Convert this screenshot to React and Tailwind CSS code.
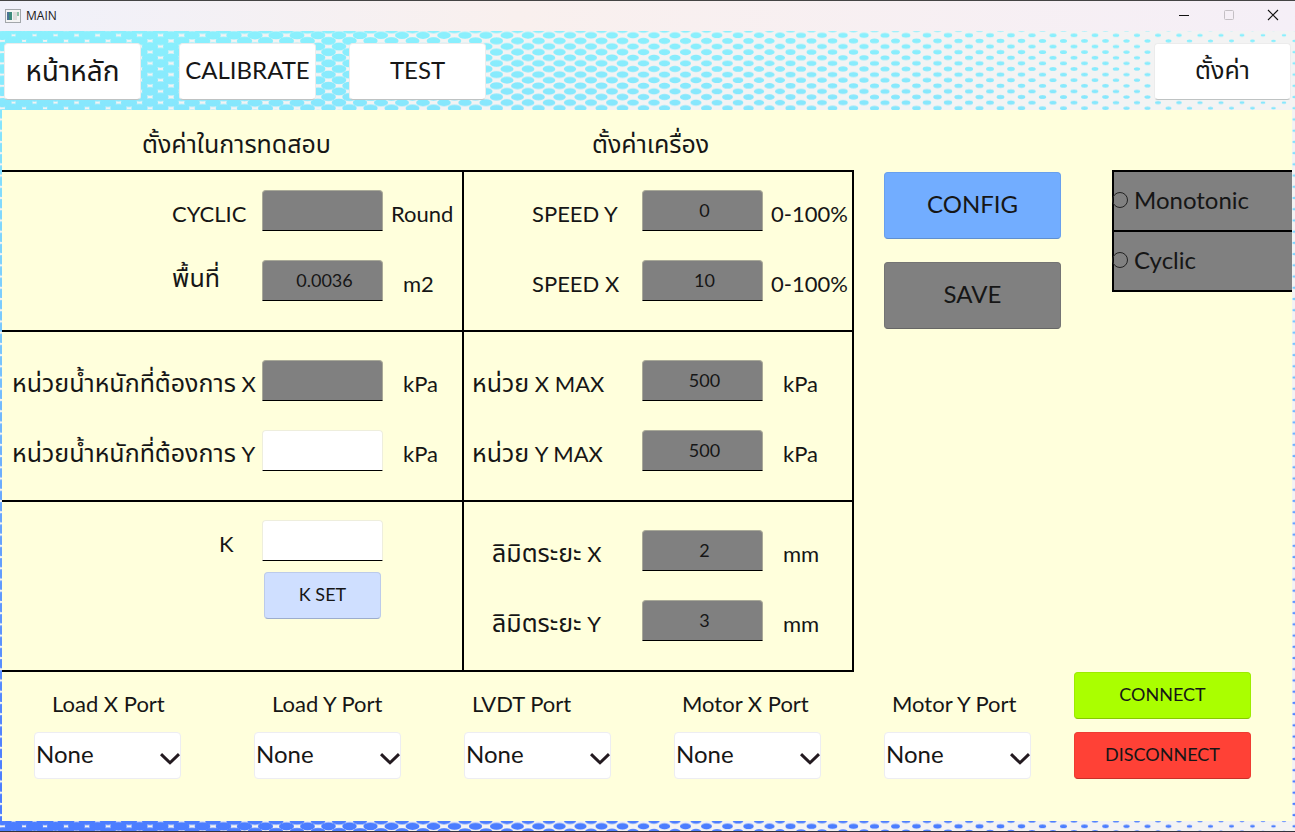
import React from "react";

const COLUMN_STEP = 21;
const ROW_STEP = 11.22;

const dots = Array.from({ length: 128 }, (_, i) => {
  const x = 3 + i * (COLUMN_STEP / 2);
  const rx = Math.max(1.5, 8.8 - 0.0042 * x - 0.0000007 * x * x);
  return { x, rx, ry: rx * 0.534, even: i % 2 === 0 };
});

function Halftone() {
  return (
    <svg className="absolute inset-0 h-full w-full" aria-hidden="true">
      <defs>
        <linearGradient id="sky" x1="0" y1="0" x2="0" y2="1">
          <stop offset="0" stopColor="#8af0fd" />
          <stop offset="0.1" stopColor="#86e6fd" />
          <stop offset="0.39" stopColor="#78c6fe" />
          <stop offset="0.6" stopColor="#68a6fe" />
          <stop offset="0.9" stopColor="#4f80ff" />
          <stop offset="1" stopColor="#4b7dff" />
        </linearGradient>
        <pattern id="dots" x="0" y="-1.3" width="1344" height={ROW_STEP} patternUnits="userSpaceOnUse">
          {dots.map((d) =>
            (d.even ? [-ROW_STEP / 2, ROW_STEP / 2, ROW_STEP * 1.5] : [0, ROW_STEP]).map((y) => (
              <ellipse key={`${d.x}-${y}`} cx={d.x} cy={y} rx={d.rx} ry={d.ry} fill="#fff" />
            ))
          )}
        </pattern>
        <mask id="dotMask">
          <rect width="100%" height="100%" fill="url(#dots)" />
        </mask>
      </defs>
      <rect width="100%" height="100%" fill="#f3f3f3" />
      <rect width="100%" height="100%" fill="url(#sky)" mask="url(#dotMask)" />
    </svg>
  );
}

function TitleBar() {
  return (
    <header className="flex h-[31px] items-center border-t border-[#444] bg-linear-to-r from-[#f0f1fa] via-[#f9f0ee] via-40% to-[#f5eff7] pl-[5px]">
      <svg width="16" height="14" viewBox="0 0 16 14" aria-hidden="true">
        <rect x="0.5" y="0.5" width="15" height="13" fill="#f4f4f4" stroke="#a3a7ab" />
        <rect x="2" y="3" width="5" height="8" fill="#3d8a7c" />
        <rect x="2" y="3" width="2" height="8" fill="#4c7396" />
        <rect x="8" y="3" width="4" height="8" fill="#dcdcdc" />
        <rect x="12" y="3" width="2" height="4" fill="#8fc0a8" />
      </svg>
      <h1 className="ml-[5px] font-['Open_Sans',sans-serif] text-xs text-[#1a1a1a]">MAIN</h1>
      <div className="ml-auto flex h-full pb-[2px]">
        <button aria-label="Minimize" className="flex w-[45px] items-center justify-center">
          <svg width="12" height="12" viewBox="0 0 12 12"><path d="M1 6.5H11" stroke="#111" /></svg>
        </button>
        <button aria-label="Maximize" disabled className="flex w-[45px] items-center justify-center">
          <svg width="12" height="12" viewBox="0 0 12 12"><rect x="1.5" y="1.5" width="9" height="9" rx="1" fill="none" stroke="#c4bfc4" /></svg>
        </button>
        <button aria-label="Close" className="flex w-[44px] items-center justify-center">
          <svg width="12" height="12" viewBox="0 0 12 12"><path d="M1 1L11 11M11 1L1 11" stroke="#111" strokeWidth="1.1" /></svg>
        </button>
      </div>
    </header>
  );
}

function NavButton({ children, className = "text-2xl" }) {
  return (
    <button className={`h-[57px] w-[137px] rounded-[4px] border border-[#ececec] border-b-[#bfc3c3] bg-white pb-1 whitespace-nowrap ${className}`}>
      {children}
    </button>
  );
}

function Field({ id, thai, label, unit, value = "", off = true, cols, labelClass = "", unitClass = "pl-5" }) {
  return (
    <div className={`grid h-[41px] items-end whitespace-nowrap ${cols}`}>
      <label htmlFor={id} className={`text-[22px] leading-[34px] ${labelClass}`}>
        {thai && <span className="text-[25px]">{thai}</span>}
        {thai && label ? " " : ""}
        {label}
      </label>
      <input
        id={id}
        defaultValue={value}
        disabled={off}
        className={`h-[41px] w-full rounded-t-[4px] border border-b-black pb-[2px] pl-1 text-center text-lg ${off ? "border-[#a9a998] bg-[#808080]" : "border-[#eeeedd] bg-white"}`}
      />
      <span className={`text-[22px] leading-[34px] ${unitClass}`}>{unit}</span>
    </div>
  );
}

const LEFT = "grid-cols-[260px_121px_1fr]";
const RIGHT = "grid-cols-[178px_121px_1fr]";

function PortSelect({ id, label, indent, className = "" }) {
  return (
    <div className={`w-[147px] ${className}`}>
      <label htmlFor={id} className={`block text-[22px] leading-8 whitespace-nowrap ${indent}`}>{label}</label>
      <div className="relative mt-[12px]">
        <select id={id} className="h-[47px] w-full appearance-none rounded-[4px] border border-[#ededf2] bg-white pb-1 pl-px text-2xl">
          <option>None</option>
        </select>
        <svg className="pointer-events-none absolute top-5 right-px" width="20" height="14" viewBox="0 0 20 14" aria-hidden="true">
          <path d="M1 2.2L10 10.8L19 2.2" fill="none" stroke="#231a20" strokeWidth="3" />
        </svg>
      </div>
    </div>
  );
}

function ModeOption({ label }) {
  return (
    <label className="flex h-[60px] items-center gap-[6px] border-t-2 border-black pb-[3px] text-2xl">
      <input type="radio" name="mode" disabled className="-ml-[2px] size-4 appearance-none rounded-full border border-[#222]" />
      {label}
    </label>
  );
}

export default function App() {
  return (
    <div className="flex min-h-screen flex-col font-[Lato,'Noto_Sans_Thai',sans-serif] text-[#161616]">
      <TitleBar />
      <div className="relative flex grow flex-col border-b border-[#33333c]">
        <Halftone />
        <nav className="relative flex h-[79px] items-center pt-3 pr-1 pb-[10px] pl-1">
          <NavButton className="text-[28px]">หน้าหลัก</NavButton>
          <NavButton className="ml-[38px] text-2xl">CALIBRATE</NavButton>
          <NavButton className="ml-[33px] text-2xl">TEST</NavButton>
          <NavButton className="ml-auto text-[25px]">ตั้งค่า</NavButton>
        </nav>

        <main className="relative mr-[3px] mb-[10px] ml-[2px] grow bg-[#ffffdc]">
          <div className="flex">
            <div className="grid shrink-0 grid-cols-[460px_392px]">
              <h2 className="flex h-[60px] items-center pt-2 pl-[140px] text-[25px]">ตั้งค่าในการทดสอบ</h2>
              <h2 className="flex h-[60px] items-center pt-2 pl-[130px] text-[25px]">ตั้งค่าเครื่อง</h2>

              <section className="flex h-40 flex-col gap-[29px] border-t-2 border-black pt-[18px]">
                <Field id="cyclic" label="CYCLIC" unit="Round" cols={LEFT} labelClass="pl-[170px]" unitClass="pl-2" />
                <Field id="area" thai="พื้นที่" value="0.0036" unit="m2" cols={LEFT} labelClass="self-start pl-[170px]" />
              </section>
              <section className="flex h-40 flex-col gap-[29px] border-x-2 border-t-2 border-black pt-[18px]">
                <Field id="speedY" label="SPEED Y" value="0" unit="0-100%" cols={RIGHT} labelClass="pl-[68px]" unitClass="pl-2" />
                <Field id="speedX" label="SPEED X" value="10" unit="0-100%" cols={RIGHT} labelClass="pl-[68px]" unitClass="pl-2" />
              </section>

              <section className="flex h-[170px] flex-col gap-[29px] border-t-2 border-black pt-7">
                <Field id="targetX" thai="หน่วยน้ำหนักที่ต้องการ" label="X" unit="kPa" cols={LEFT} labelClass="pl-[10px]" />
                <Field id="targetY" thai="หน่วยน้ำหนักที่ต้องการ" label="Y" unit="kPa" off={false} cols={LEFT} labelClass="pl-[10px]" />
              </section>
              <section className="flex h-[170px] flex-col gap-[29px] border-x-2 border-t-2 border-black pt-7">
                <Field id="maxX" thai="หน่วย" label="X MAX" value="500" unit="kPa" cols={RIGHT} labelClass="pl-2" />
                <Field id="maxY" thai="หน่วย" label="Y MAX" value="500" unit="kPa" cols={RIGHT} labelClass="pl-2" />
              </section>

              <section className="h-[172px] border-y-2 border-black pt-[18px]">
                <Field id="k" label="K" off={false} cols={LEFT} labelClass="pl-[217px]" />
                <button className="mt-[11px] ml-[262px] h-[47px] w-[117px] rounded-[4px] border border-[#bccbea] border-b-[#9dadcd] bg-[#cfdfff] pb-1 text-lg">K SET</button>
              </section>
              <section className="flex h-[172px] flex-col gap-[29px] border-2 border-black pt-7">
                <Field id="limitX" thai="ลิมิตระยะ" label="X" value="2" unit="mm" cols={RIGHT} labelClass="pl-7" />
                <Field id="limitY" thai="ลิมิตระยะ" label="Y" value="3" unit="mm" cols={RIGHT} labelClass="pl-7" />
              </section>
            </div>

            <div className="flex grow items-start pt-[60px] pl-[30px]">
              <div className="mt-[2px] flex w-[177px] flex-col gap-[23px]">
                <button className="h-[67px] rounded-[4px] border border-[#68a0ee] border-b-[#5f8fd0] bg-[#72adff] pb-1 text-2xl">CONFIG</button>
                <button disabled className="h-[67px] rounded-[4px] border border-[#747474] border-b-[#666] bg-[#808080] pb-1 text-2xl">SAVE</button>
              </div>
              <fieldset className="ml-auto w-[180px] border-b-2 border-l-2 border-black bg-[#808080]">
                <ModeOption label="Monotonic" />
                <ModeOption label="Cyclic" />
              </fieldset>
            </div>
          </div>

          <div className="flex items-start pr-[41px] pl-8">
            <div className="flex gap-[63px] pt-4">
              <PortSelect id="loadX" label="Load X Port" indent="pl-[18px]" className="mr-[10px]" />
              <PortSelect id="loadY" label="Load Y Port" indent="pl-[18px]" />
              <PortSelect id="lvdt" label="LVDT Port" indent="pl-2" />
              <PortSelect id="motorX" label="Motor X Port" indent="pl-2" />
              <PortSelect id="motorY" label="Motor Y Port" indent="pl-2" />
            </div>
            <div className="ml-auto flex w-[177px] flex-col gap-[13px]">
              <button className="h-[47px] rounded-[4px] border border-[#9cec00] border-b-[#86c800] bg-[#aaff00] pb-1 text-lg">CONNECT</button>
              <button className="h-[47px] rounded-[4px] border border-[#ee3c32] border-b-[#c83028] bg-[#ff4136] pb-1 text-lg">DISCONNECT</button>
            </div>
          </div>
        </main>
      </div>
    </div>
  );
}
